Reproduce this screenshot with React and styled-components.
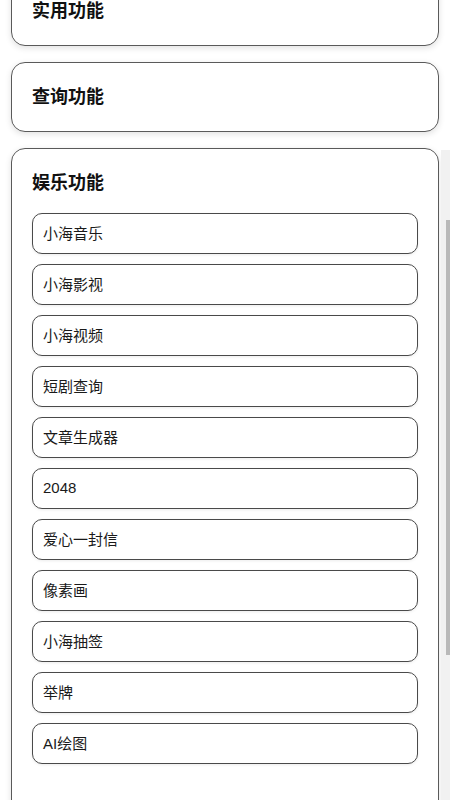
import React from 'react';
import styled, { createGlobalStyle } from 'styled-components';

const GlobalStyle = createGlobalStyle`
  html, body {
    margin: 0;
    padding: 0;
    background: #ffffff;
    overflow: hidden;
  }
  body {
    font-family: "Liberation Sans", "Noto Sans CJK SC", sans-serif;
    color: #111;
  }
`;

const Page = styled.div`
  display: flex;
  flex-direction: column;
  gap: 16px;
  margin-top: -24px;
  height: 824px;
  overflow: hidden;
`;

const CardRow = styled.div`
  display: flex;
  align-items: flex-start;
  padding-left: 11px;
  padding-right: ${props => (props.scroll ? '0' : '11px')};
`;

const Card = styled.section`
  flex: 1;
  background: #fff;
  border: 1px solid #5a5a5a;
  border-radius: 14px;
  padding: 20px;
  box-shadow: 0 2px 6px rgba(0, 0, 0, 0.12);
`;

const Title = styled.h3`
  margin: 0;
  font-size: 18px;
  line-height: 28px;
  font-weight: 700;
  color: #111;
`;

const ItemList = styled.div`
  display: flex;
  flex-direction: column;
  gap: 10px;
  margin-top: 16px;
  padding-bottom: 40px;
`;

const Item = styled.div`
  height: 37px;
  display: flex;
  align-items: center;
  padding: 0 10px 2px;
  border: 1px solid #4a4a4a;
  border-radius: 10px;
  background: #fff;
  font-size: 15px;
  color: #1a1a1a;
  box-shadow: 0 1px 3px rgba(0, 0, 0, 0.08);
`;

const ScrollTrack = styled.div`
  width: 9px;
  margin-left: 2px;
  margin-top: 2px;
  align-self: stretch;
  background: #f1f1f1;
  display: flex;
  justify-content: flex-end;
`;

const ScrollThumb = styled.div`
  width: 4px;
  height: 435px;
  margin-top: 70px;
  background: #b9b9b9;
`;

const entertainment = [
  '小海音乐',
  '小海影视',
  '小海视频',
  '短剧查询',
  '文章生成器',
  '2048',
  '爱心一封信',
  '像素画',
  '小海抽签',
  '举牌',
  'AI绘图',
];

const App = () => (
  <>
    <GlobalStyle />
    <Page>
      <CardRow>
        <Card>
          <Title>实用功能</Title>
        </Card>
      </CardRow>
      <CardRow>
        <Card>
          <Title>查询功能</Title>
        </Card>
      </CardRow>
      <CardRow scroll>
        <Card>
          <Title>娱乐功能</Title>
          <ItemList>
            {entertainment.map(name => (
              <Item key={name}>{name}</Item>
            ))}
          </ItemList>
        </Card>
        <ScrollTrack>
          <ScrollThumb />
        </ScrollTrack>
      </CardRow>
    </Page>
  </>
);

export default App;
